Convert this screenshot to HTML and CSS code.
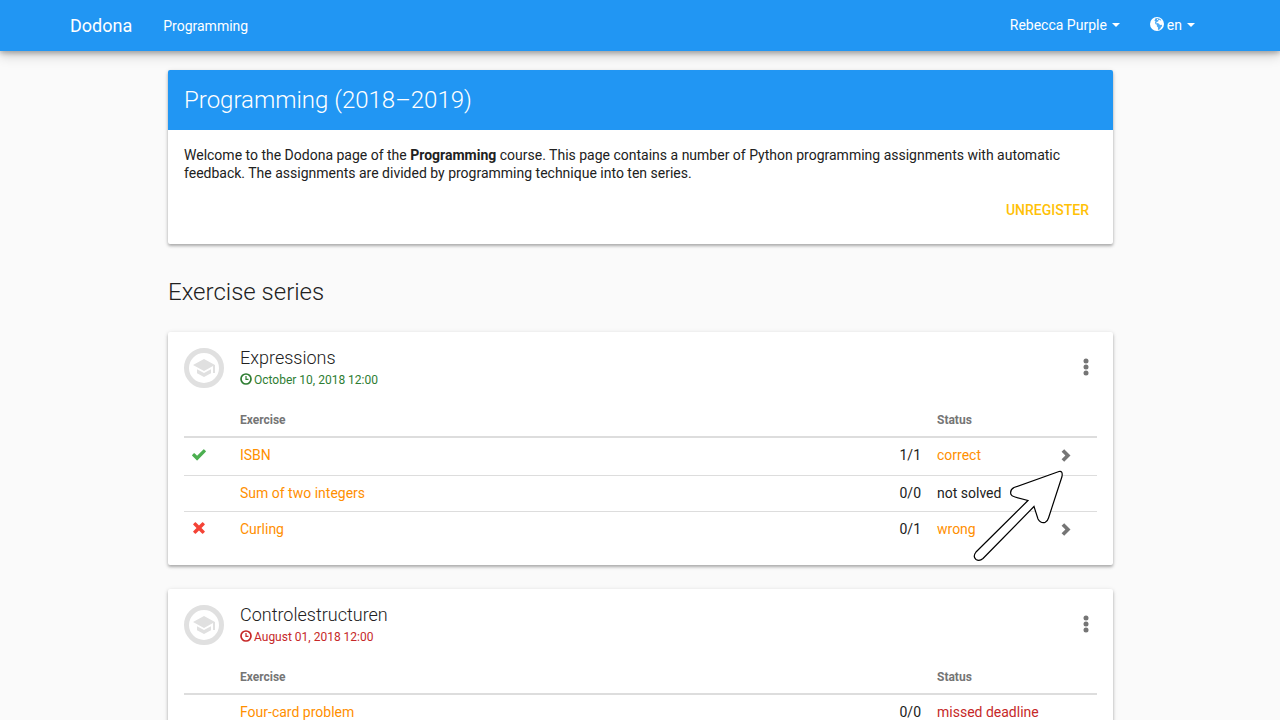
FILE: index.html
```html
<!DOCTYPE html>
<html lang="en">
<head>
<meta charset="utf-8">
<meta name="viewport" content="width=device-width, initial-scale=1">
<title>Programming - Dodona</title>
<link rel="stylesheet" href="styles.css">
</head>
<body>
<svg class="sprite" aria-hidden="true">
  <symbol id="globe" viewBox="0 0 14 14"><circle cx="7" cy="7" r="7" fill="#fff"/><path fill="#2196f3" d="M5.500 1.200 7.800 1l2.400.9 1.200 1.300-1.100.3-.6-.8-1.300.5-.2 1.200-1.600.7-.3 1.300 1.500-.3 1.200.6 1 1.300 1.700-.2.500 1.300-1.300 1.300-.8 1.600-1.500 1-.7-.6.1-1.800-1.200-1.300.1-1.500L5.600 7.300 4.900 5.700 5.500 4.500 4.400 3.600z" opacity=".8"/><path fill="#fff" d="m7.300 1.700 1 .1-.5 1.100-.9.200z"/></symbol>
  <symbol id="clock" viewBox="0 0 12 12"><circle cx="6" cy="6" r="5" fill="none" stroke="currentColor" stroke-width="1.700"/><path d="M6 3v3.400h2.500" fill="none" stroke="currentColor" stroke-width="1.200"/></symbol>
  <symbol id="cap" viewBox="0 0 24 24"><path fill="currentColor" d="M5 13.180v4L12 21l7-3.820v-4L12 17l-7-3.820zM12 3 1 9l11 6 9-4.910V17h2V9L12 3z"/></symbol>
  <symbol id="dots" viewBox="0 0 24 24"><g fill="currentColor"><circle cx="12" cy="5" r="2.500"/><circle cx="12" cy="11" r="2.500"/><circle cx="12" cy="17" r="2.500"/></g></symbol>
  <symbol id="chevron" viewBox="0 0 10 13"><path fill="currentColor" d="M3.200.2 9.500 6.500l-6.300 6.300L.6 10.300l3.800-3.800L.6 2.700z"/></symbol>
  <symbol id="ok" viewBox="0 0 14 12"><path fill="currentColor" d="M11.400.4q.4-.4.8 0l1.600 1.500q.3.4 0 .8l-8.300 8.500q-.4.4-.8 0L.2 6.700q-.4-.4 0-.8l1.600-1.600q.4-.3.8 0l2.500 2.500z"/></symbol>
  <symbol id="remove" viewBox="0 0 12 12"><path fill="currentColor" d="M2.700.3 6 3.500 9.300.3q.3-.3.6 0l1.800 1.800q.3.3 0 .6L8.500 6l3.200 3.300q.3.3 0 .6l-1.800 1.800q-.3.3-.6 0L6 8.500l-3.300 3.200q-.3.3-.6 0L.3 9.900Q0 9.600.3 9.300L3.500 6 .3 2.700Q0 2.400.3 2.100L2.100.3q.3-.3.6 0z"/></symbol>
</svg>

<nav class="navbar">
  <div class="navbar-inner">
    <a class="brand" href="#">Dodona</a>
    <a class="nav-link" href="#">Programming</a>
    <div class="nav-right">
      <button class="nav-button" type="button">Rebecca Purple <span class="caret"></span></button>
      <button class="nav-button" type="button"><svg class="globe"><use href="#globe"/></svg>en <span class="caret"></span></button>
    </div>
  </div>
</nav>

<main class="content">
  <section class="card">
    <h1 class="card-title">Programming (2018–2019)</h1>
    <div class="card-text">
      <p>Welcome to the Dodona page of the <strong>Programming</strong> course. This page contains a number of Python programming assignments with automatic feedback. The assignments are divided by programming technique into ten series.</p>
      <div class="actions"><button class="btn" type="button">UNREGISTER</button></div>
    </div>
  </section>

  <h2 class="section-title">Exercise series</h2>

  <section class="card series">
    <header class="series-header">
      <span class="badge"><svg><use href="#cap"/></svg></span>
      <div class="series-info">
        <h3>Expressions</h3>
        <p class="deadline open"><svg><use href="#clock"/></svg>October 10, 2018 12:00</p>
      </div>
      <button class="menu" type="button" aria-label="Series actions"><svg><use href="#dots"/></svg></button>
    </header>
    <table class="exercises">
      <thead><tr><th class="col-icon"></th><th>Exercise</th><th class="col-count"></th><th class="col-status">Status</th><th class="col-go"></th></tr></thead>
      <tbody>
        <tr class="tried"><td><svg class="ok"><use href="#ok"/></svg></td><td><a href="#">ISBN</a></td><td class="count">1/1</td><td><a href="#">correct</a></td><td><a class="go" href="#" aria-label="Open ISBN"><svg><use href="#chevron"/></svg></a></td></tr>
        <tr><td></td><td><a href="#">Sum of two integers</a></td><td class="count">0/0</td><td>not solved</td><td></td></tr>
        <tr class="tried"><td><svg class="remove"><use href="#remove"/></svg></td><td><a href="#">Curling</a></td><td class="count">0/1</td><td><a href="#">wrong</a></td><td><a class="go" href="#" aria-label="Open Curling"><svg><use href="#chevron"/></svg></a></td></tr>
      </tbody>
    </table>
    <svg class="pointer" viewBox="0 0 92 94" aria-hidden="true"><path d="M86 2.500 41 18.500Q36.500 21 38 25.500 38.500 27 42 28L55 31.500 3 83Q-.5 87.500 3 90.500 6.500 92.500 10 89.500L61 37.500 65 50Q67.500 54.500 72 53.500 74.500 52.500 75.500 49L89 7.500Q90 1.500 86 2.500z" fill="#fff" stroke="#000" stroke-width="1.200"/></svg>
  </section>

  <section class="card series">
    <header class="series-header">
      <span class="badge"><svg><use href="#cap"/></svg></span>
      <div class="series-info">
        <h3>Controlestructuren</h3>
        <p class="deadline closed"><svg><use href="#clock"/></svg>August 01, 2018 12:00</p>
      </div>
      <button class="menu" type="button" aria-label="Series actions"><svg><use href="#dots"/></svg></button>
    </header>
    <table class="exercises">
      <thead><tr><th class="col-icon"></th><th>Exercise</th><th class="col-count"></th><th class="col-status">Status</th><th class="col-go"></th></tr></thead>
      <tbody>
        <tr><td></td><td><a href="#">Four-card problem</a></td><td class="count">0/0</td><td class="missed">missed deadline</td><td></td></tr>
      </tbody>
    </table>
  </section>
</main>
</body>
</html>
```
FILE: styles.css
```css
* { box-sizing: border-box; }
body {
  margin: 0;
  background: #fafafa;
  color: #212121;
  font: 14px/18px Roboto, sans-serif;
}
h1, h2, h3, p { margin: 0; }
h1, h2, h3 { font-weight: 300; }
a { color: #ff8f00; text-decoration: none; }
button { border: 0; background: none; font: inherit; cursor: pointer; }
.sprite { display: none; }

.navbar {
  background: #2196f3;
  box-shadow: 0 2px 5px rgba(0, 0, 0, .26), 0 4px 12px rgba(0, 0, 0, .2);
}
.navbar-inner {
  display: flex;
  align-items: center;
  max-width: 1170px;
  min-height: 51px;
  margin: 0 auto;
  padding: 0 15px;
}
.navbar a, .nav-button { color: #fff; }
.navbar .brand { font-size: 18px; margin-right: 31px; }
.nav-right { display: flex; margin-left: auto; padding-bottom: 2px; }
.nav-button { display: flex; align-items: center; padding: 0 15px; }
.caret {
  margin-left: 5px;
  border: 4px solid transparent;
  border-top-color: #fff;
  border-bottom: 0;
}
.globe { width: 14px; height: 14px; margin: 0 3px 2px 0; }

.content { max-width: 946px; margin: 19px auto 24px; padding-left: 1px; }
.card {
  position: relative;
  margin-bottom: 24px;
  background: #fff;
  border-radius: 2px;
  box-shadow: 0 2px 3px rgba(0, 0, 0, .26), 0 1px 5px rgba(0, 0, 0, .12);
}
.card-title {
  padding: 16px;
  border-radius: 2px 2px 0 0;
  background: #2196f3;
  color: #fff;
  font-size: 24px;
  line-height: 28px;
}
.card-text { padding: 16px; }
.actions { display: flex; justify-content: flex-end; margin-top: 10px; }
.btn { height: 36px; padding: 0 8px; color: #ffc107; font-weight: 500; }
.section-title { margin: 34px 0 26px; font-size: 24px; line-height: 28px; }

.series { padding: 16px; }
.series-header { display: flex; height: 56px; }
.badge {
  display: flex;
  align-items: center;
  justify-content: center;
  width: 40px;
  height: 40px;
  margin-right: 16px;
  border: 5px solid #e0e0e0;
  border-radius: 50%;
  color: #e0e0e0;
}
.badge svg { flex: none; width: 24px; height: 24px; }
.series-info { flex: 1; }
.series-info h3 { font-size: 18px; line-height: 20px; }
.deadline { display: flex; align-items: center; margin-top: 3px; font-size: 12px; }
.deadline svg { width: 12px; height: 12px; margin: 0 2px 2px 0; }
.open { color: #2e7d32; }
.closed, .missed { color: #c62828; }
.menu { width: 24px; height: 40px; margin-right: -1px; padding: 0; color: #757575; }
.menu svg { display: block; width: 24px; height: 24px; }

.exercises { width: 100%; table-layout: fixed; border-spacing: 0; }
.exercises th {
  height: 34px;
  padding: 7px 8px;
  border-bottom: 2px solid #ddd;
  color: #757575;
  font-size: 12px;
  font-weight: 700;
  text-align: left;
}
.exercises td { height: 36px; padding: 8px; border-top: 1px solid #ddd; vertical-align: top; }
.exercises .tried td { height: 38px; }
.exercises tr:first-child td { height: 37px; border-top: 0; }
.exercises .count { text-align: right; }
.exercises svg { display: block; }
.col-icon { width: 48px; }
.col-count { width: 60px; }
.col-status { width: 124px; }
.col-go { width: 44px; }
.ok { width: 14px; height: 12px; margin-top: 3px; color: #4caf50; }
.remove { width: 12px; height: 12px; margin: 2px 1px; color: #f44336; }
.go { color: #757575; }
.go svg { width: 10px; height: 13px; margin-top: 3px; }
.pointer { position: absolute; right: 48px; bottom: 2px; width: 92px; height: 94px; }
```
